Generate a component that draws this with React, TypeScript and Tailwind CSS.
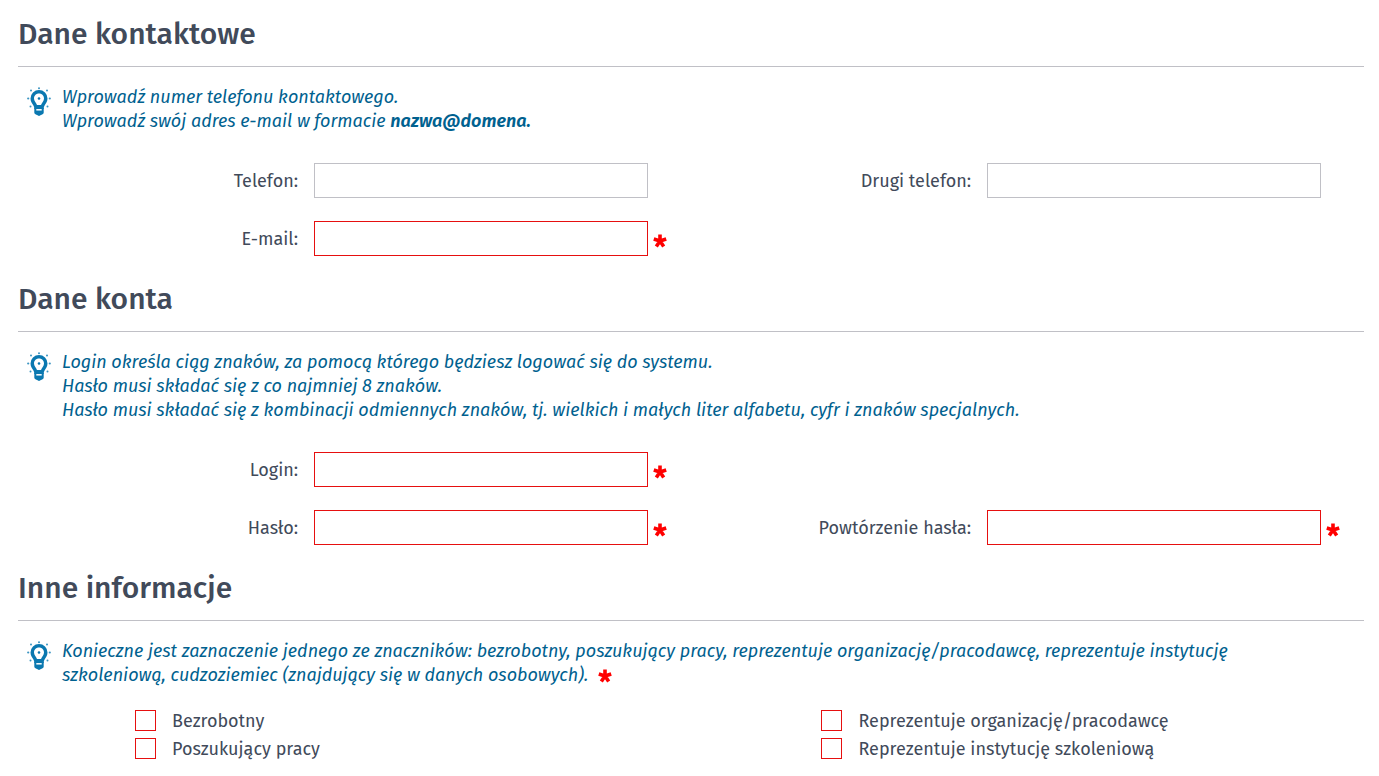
import { useState } from 'react';
import type { ReactNode } from 'react';

const leftOptions = [
  { id: 'bezrobotny', label: 'Bezrobotny' },
  { id: 'poszukujacy', label: 'Poszukujący pracy' },
];

const rightOptions = [
  { id: 'organizacja', label: 'Reprezentuje organizację/pracodawcę' },
  { id: 'instytucja', label: 'Reprezentuje instytucję szkoleniową' },
];

function BulbIcon() {
  return (
    <svg viewBox="0 0 24 30" className="w-6 h-[30px] shrink-0" fill="none" aria-hidden="true">
      <path
        d="M12 3a8.500 8.500 0 0 0-8.500 8.500c0 3.400 1.800 5 2.900 7 .8 1.400.9 2.500.9 3.500h9.400c0-1 .1-2.100.9-3.500 1.100-2 2.900-3.600 2.900-7A8.500 8.500 0 0 0 12 3Z"
        fill="#0a78b0"
      />
      <path
        d="M12 6.500c-3 0-5 2.200-5 5 0 2.500 2 3.800 3 6.500h4c1-2.700 3-4 3-6.500 0-2.800-2-5-5-5Z"
        fill="#fff"
      />
      <path d="M7.300 21h9.400v4.500c0 .8-.5 1.300-1.200 1.700L12 29l-3.500-1.800c-.7-.4-1.200-.9-1.200-1.700Z" fill="#0a78b0" />
      <path d="M9.300 22.800h5.400" stroke="#fff" strokeWidth="1.500" />
      <circle cx="12" cy="11.500" r="1.300" fill="#0a78b0" />
      <g fill="#3b95c2">
        <circle cx="12" cy="1.200" r="1" />
        <circle cx="4" cy="3.500" r="1" />
        <circle cx="20" cy="3.500" r="1" />
        <circle cx="1.200" cy="11.500" r="1.100" />
        <circle cx="22.800" cy="11.500" r="1.100" />
        <circle cx="3.500" cy="19.500" r="1" />
        <circle cx="20.500" cy="19.500" r="1" />
      </g>
    </svg>
  );
}

function RequiredMark() {
  return (
    <svg viewBox="0 0 14 14" className="inline-block w-[14px] h-[14px]" role="img" aria-label="Pole wymagane">
      <path
        d="M7 7V.5M7 7 .8 5M7 7l6.200-2M7 7l-3.700 5.500M7 7l3.700 5.500"
        stroke="#ff0000"
        strokeWidth="3.600"
        fill="none"
      />
    </svg>
  );
}

function Section({ title, tip, children }: { title: string; tip: ReactNode; children: ReactNode }) {
  return (
    <section>
      <h2 className="pb-3 border-b border-[#c0c0c6] text-[30px] leading-10 font-medium">{title}</h2>
      <div className="mt-[18px] pl-[9px] pr-16 flex items-start gap-[11px] text-[#00618f]">
        <div className="pt-[2px]">
          <BulbIcon />
        </div>
        <p className="italic leading-6">{tip}</p>
      </div>
      {children}
    </section>
  );
}

function Field({ id, label, type = 'text', required = false }: {
  id: string;
  label: string;
  type?: string;
  required?: boolean;
}) {
  return (
    <div className="flex items-center">
      <label htmlFor={id} className="w-[44%] pr-4 text-right">{label}</label>
      <input
        id={id}
        type={type}
        required={required}
        className={`flex-1 min-w-0 h-[35px] px-2 bg-white border shadow-none outline-none ${required ? 'border-[#e60f0f]' : 'border-[#c0c0c6]'}`}
      />
      <div className="w-[43px] pl-[5px] pt-1 flex">{required ? <RequiredMark /> : null}</div>
    </div>
  );
}

export default function App() {
  const [checked, setChecked] = useState<string[]>([]);

  const toggle = (id: string) => {
    setChecked((prev) => (prev.includes(id) ? prev.filter((x) => x !== id) : [...prev, id]));
  };

  return (
    <form className="pt-[14px] pb-4 pl-[18px] pr-[15px] space-y-[23px] bg-white text-[#414a5a] text-[18px] leading-6 font-['Fira_Sans','Noto_Sans',sans-serif]">
      <Section
        title="Dane kontaktowe"
        tip={
          <>
            Wprowadź numer telefonu kontaktowego.
            <br />
            Wprowadź swój adres e-mail w formacie <strong className="font-semibold">nazwa@domena.</strong>
          </>
        }
      >
        <div className="mt-[30px] grid grid-cols-2 gap-y-[23px]">
          <Field id="telefon" label="Telefon:" type="tel" />
          <Field id="telefon2" label="Drugi telefon:" type="tel" />
          <Field id="email" label="E-mail:" type="email" required />
        </div>
      </Section>

      <Section
        title="Dane konta"
        tip={
          <>
            Login określa ciąg znaków, za pomocą którego będziesz logować się do systemu.
            <br />
            Hasło musi składać się z co najmniej 8 znaków.
            <br />
            Hasło musi składać się z kombinacji odmiennych znaków, tj. wielkich i małych liter alfabetu, cyfr i znaków specjalnych.
          </>
        }
      >
        <div className="mt-[30px] space-y-[23px]">
          <div className="grid grid-cols-2">
            <Field id="login" label="Login:" required />
          </div>
          <div className="grid grid-cols-2">
            <Field id="haslo" label="Hasło:" type="password" required />
            <Field id="haslo2" label="Powtórzenie hasła:" type="password" required />
          </div>
        </div>
      </Section>

      <Section
        title="Inne informacje"
        tip={
          <>
            Konieczne jest zaznaczenie jednego ze znaczników: bezrobotny, poszukujący pracy, reprezentuje organizację/pracodawcę, reprezentuje instytucję
            szkoleniową, cudzoziemiec (znajdujący się w danych osobowych). &nbsp;<RequiredMark />
          </>
        }
      >
        <div className="mt-[23px] grid grid-cols-[51%_1fr]">
          {[leftOptions, rightOptions].map((options) => (
            <div key={options[0].id} className="pl-[117px] space-y-[5px]">
              {options.map((option) => (
                <label key={option.id} className="flex items-start gap-4 leading-[23px]">
                  <input
                    type="checkbox"
                    checked={checked.includes(option.id)}
                    onChange={() => toggle(option.id)}
                    className="appearance-none w-[21px] h-[21px] shrink-0 bg-white border border-[#e60f0f] checked:bg-[#e60f0f]"
                  />
                  {option.label}
                </label>
              ))}
            </div>
          ))}
        </div>
      </Section>
    </form>
  );
}
